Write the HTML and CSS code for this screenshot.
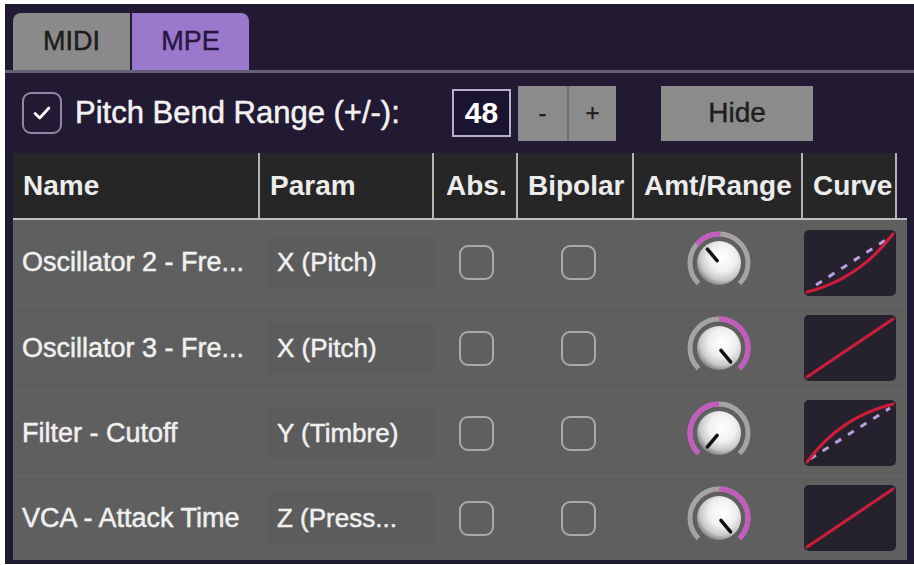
FILE: index.html
```html
<!DOCTYPE html>
<html lang="en">
<head>
<meta charset="utf-8">
<title>MPE</title>
<link rel="stylesheet" href="styles.css">
</head>
<body>
<svg class="defs" width="0" height="0" aria-hidden="true">
  <defs>
    <radialGradient id="knobFace" cx="58%" cy="38%" r="62%">
      <stop offset="0" stop-color="#ffffff"/>
      <stop offset="0.5" stop-color="#f0f0f0"/>
      <stop offset="0.82" stop-color="#c9c9c9"/>
      <stop offset="1" stop-color="#8d8d8d"/>
    </radialGradient>
  </defs>
</svg>
<div class="panel">
  <div class="tabs">
    <div class="tab tab-midi">MIDI</div>
    <div class="tab tab-mpe">MPE</div>
  </div>
  <div class="tab-rule"></div>

  <div class="controls">
    <div class="pb">
      <span class="check">
        <svg viewBox="0 0 24 24" width="22" height="22"><polyline points="4.5 12.5 9.5 17.5 19.5 6.5" fill="none" stroke="#ffffff" stroke-width="3" stroke-linecap="round" stroke-linejoin="round"/></svg>
      </span>
      <span class="pb-label">Pitch Bend Range (+/-):</span>
    </div>
    <div class="num">48</div>
    <div class="stepper">
      <button class="btn step">-</button>
      <button class="btn step">+</button>
    </div>
    <button class="btn hide">Hide</button>
  </div>

  <div class="table">
    <div class="thead">
      <div class="th">Name</div>
      <div class="th">Param</div>
      <div class="th th-abs">Abs.</div>
      <div class="th">Bipolar</div>
      <div class="th">Amt/Range</div>
      <div class="th">Curve</div>
      <div class="th-rest"></div>
    </div>

    <div class="row">
      <div class="cell name">Oscillator 2 - Fre...</div>
      <div class="cell"><div class="param">X (Pitch)</div></div>
      <div class="cell center"><span class="box"></span></div>
      <div class="cell center bip"><span class="box"></span></div>
      <div class="cell center">
        <svg class="knob" viewBox="0 0 70 70" width="70" height="70">
          <path d="M14.49 55.51 A29 29 0 1 1 55.51 55.51" fill="none" stroke="#a4a4a4" stroke-width="5"/>
          <path d="M12.8 16.36 A29 29 0 0 1 36.52 6.04" fill="none" stroke="#c35cbc" stroke-width="5"/>
          <circle cx="35" cy="35" r="22" fill="url(#knobFace)"/>
          <line x1="33.07" y1="32.7" x2="23.43" y2="21.21" stroke="#111" stroke-width="3.5" stroke-linecap="round"/>
        </svg>
      </div>
      <div class="cell center">
        <svg class="curve" viewBox="0 0 92 66" width="92" height="66">
          <rect width="92" height="66" rx="5" fill="#25222e"/>
          <line x1="12" y1="55" x2="88" y2="6" stroke="#b99ddc" stroke-width="3" stroke-dasharray="7 8"/>
          <path d="M3 62 Q55 49 89 4" fill="none" stroke="#d01c3b" stroke-width="3" stroke-linecap="round"/>
        </svg>
      </div>
      <div></div>
    </div>

    <div class="row">
      <div class="cell name">Oscillator 3 - Fre...</div>
      <div class="cell"><div class="param">X (Pitch)</div></div>
      <div class="cell center"><span class="box"></span></div>
      <div class="cell center bip"><span class="box"></span></div>
      <div class="cell center">
        <svg class="knob" viewBox="0 0 70 70" width="70" height="70">
          <path d="M14.49 55.51 A29 29 0 1 1 55.51 55.51" fill="none" stroke="#a4a4a4" stroke-width="5"/>
          <path d="M35 6 A29 29 0 0 1 55.51 55.51" fill="none" stroke="#c35cbc" stroke-width="5"/>
          <circle cx="35" cy="35" r="22" fill="url(#knobFace)"/>
          <line x1="36.93" y1="37.3" x2="46.57" y2="48.79" stroke="#111" stroke-width="3.5" stroke-linecap="round"/>
        </svg>
      </div>
      <div class="cell center">
        <svg class="curve" viewBox="0 0 92 66" width="92" height="66">
          <rect width="92" height="66" rx="5" fill="#25222e"/>
          <path d="M3 62 L89 4" fill="none" stroke="#d01c3b" stroke-width="3" stroke-linecap="round"/>
        </svg>
      </div>
      <div></div>
    </div>

    <div class="row">
      <div class="cell name">Filter - Cutoff</div>
      <div class="cell"><div class="param">Y (Timbre)</div></div>
      <div class="cell center"><span class="box"></span></div>
      <div class="cell center bip"><span class="box"></span></div>
      <div class="cell center">
        <svg class="knob" viewBox="0 0 70 70" width="70" height="70">
          <path d="M14.49 55.51 A29 29 0 1 1 55.51 55.51" fill="none" stroke="#a4a4a4" stroke-width="5"/>
          <path d="M14.49 55.51 A29 29 0 0 1 35 6" fill="none" stroke="#c35cbc" stroke-width="5"/>
          <circle cx="35" cy="35" r="22" fill="url(#knobFace)"/>
          <line x1="33.07" y1="37.3" x2="23.43" y2="48.79" stroke="#111" stroke-width="3.5" stroke-linecap="round"/>
        </svg>
      </div>
      <div class="cell center">
        <svg class="curve" viewBox="0 0 92 66" width="92" height="66">
          <rect width="92" height="66" rx="5" fill="#25222e"/>
          <line x1="6" y1="59" x2="86" y2="8" stroke="#b99ddc" stroke-width="3" stroke-dasharray="7 8"/>
          <path d="M3 62 Q36 17 89 4" fill="none" stroke="#d01c3b" stroke-width="3" stroke-linecap="round"/>
        </svg>
      </div>
      <div></div>
    </div>

    <div class="row">
      <div class="cell name">VCA - Attack Time</div>
      <div class="cell"><div class="param">Z (Press...</div></div>
      <div class="cell center"><span class="box"></span></div>
      <div class="cell center bip"><span class="box"></span></div>
      <div class="cell center">
        <svg class="knob" viewBox="0 0 70 70" width="70" height="70">
          <path d="M14.49 55.51 A29 29 0 1 1 55.51 55.51" fill="none" stroke="#a4a4a4" stroke-width="5"/>
          <path d="M35 6 A29 29 0 0 1 55.51 55.51" fill="none" stroke="#c35cbc" stroke-width="5"/>
          <circle cx="35" cy="35" r="22" fill="url(#knobFace)"/>
          <line x1="36.93" y1="37.3" x2="46.57" y2="48.79" stroke="#111" stroke-width="3.5" stroke-linecap="round"/>
        </svg>
      </div>
      <div class="cell center">
        <svg class="curve" viewBox="0 0 92 66" width="92" height="66">
          <rect width="92" height="66" rx="5" fill="#25222e"/>
          <path d="M3 62 L89 4" fill="none" stroke="#d01c3b" stroke-width="3" stroke-linecap="round"/>
        </svg>
      </div>
      <div></div>
    </div>
  </div>
</div>
</body>
</html>
```

FILE: styles.css
```css
* {
  box-sizing: border-box;
}

html,
body {
  margin: 0;
  background: #ffffff;
}

body {
  font-family: "Liberation Sans", Arial, Helvetica, sans-serif;
}

.defs {
  display: block;
  width: 0;
  height: 0;
  overflow: hidden;
}

.panel {
  margin: 4px 0 0 5px;
  width: 909px;
  height: 560px;
  background: #221a32;
  display: flex;
  flex-direction: column;
  overflow: hidden;
}

/* tab strip */
.tabs {
  display: flex;
  gap: 2px;
  padding: 9px 0 0 8px;
  height: 66px;
}

.tab {
  width: 117px;
  height: 57px;
  display: flex;
  align-items: center;
  justify-content: center;
  font-size: 27px;
  -webkit-text-stroke: 0.4px currentColor;
}

.tab-midi {
  background: #8a8a8a;
  color: #1b1b1b;
  border-radius: 8px 0 0 0;
}

.tab-mpe {
  background: #9a78cb;
  color: #27163f;
  border-radius: 0 8px 0 0;
}

.tab-rule {
  height: 3px;
  background: #665d78;
}

/* pitch bend controls */
.controls {
  height: 80px;
  display: flex;
  align-items: center;
  padding-left: 17px;
}

.pb {
  width: 430px;
  display: flex;
  align-items: center;
  gap: 13px;
}

.check {
  width: 40px;
  height: 42px;
  border: 2px solid #8f87a6;
  border-radius: 9px;
  display: flex;
  align-items: center;
  justify-content: center;
}

.pb-label {
  color: #f2f2f2;
  font-size: 31px;
  white-space: nowrap;
  -webkit-text-stroke: 0.5px currentColor;
}

.num {
  width: 59px;
  height: 48px;
  border: 2px solid #b7b0c7;
  background: #1b1430;
  color: #ffffff;
  font-weight: bold;
  font-size: 30px;
  display: flex;
  align-items: center;
  justify-content: center;
}

.stepper {
  display: flex;
  margin-left: 7px;
}

.btn {
  background: #8b8b8b;
  color: #1e1e1e;
  height: 55px;
  border: 0;
  padding: 0;
  font-family: inherit;
  display: flex;
  align-items: center;
  justify-content: center;
  -webkit-text-stroke: 0.4px currentColor;
}

.step {
  width: 49px;
  font-size: 24px;
}

.step + .step {
  border-left: 2px solid #6f6f6f;
}

.hide {
  width: 152px;
  margin-left: 45px;
  font-size: 28px;
}

/* modulation table */
.table {
  margin-left: 8px;
  width: 894px;
}

.thead,
.row {
  display: grid;
  grid-template-columns: 247px 174px 84px 116px 169px 94px 1fr;
}

.thead {
  height: 67px;
  border-bottom: 2px solid #bdbdbd;
}

.th {
  background: #262626;
  border-right: 2px solid #b3b3b3;
  color: #ececec;
  font-weight: bold;
  font-size: 28px;
  display: flex;
  align-items: center;
  padding-left: 10px;
  white-space: nowrap;
}

.th-abs {
  padding-left: 12px;
}

.row {
  height: 85px;
  background: #5f5f5f;
  align-items: center;
  border-top: 1px solid #666666;
}

.thead + .row {
  border-top: 0;
}

.cell {
  display: flex;
  align-items: center;
  height: 100%;
  color: #f0f0f0;
  font-size: 27px;
  white-space: nowrap;
  -webkit-text-stroke: 0.5px currentColor;
}

.name {
  padding-left: 9px;
}

.param {
  margin-left: 7px;
  width: 170px;
  height: 50px;
  padding-left: 10px;
  display: flex;
  align-items: center;
  background: #5c5c5c;
  font-size: 26px;
}

.center {
  justify-content: center;
}

.bip {
  padding-left: 4px;
}

.box {
  width: 35px;
  height: 35px;
  border: 2px solid #a9a9a9;
  border-radius: 9px;
}

.knob,
.curve {
  display: block;
}
```
